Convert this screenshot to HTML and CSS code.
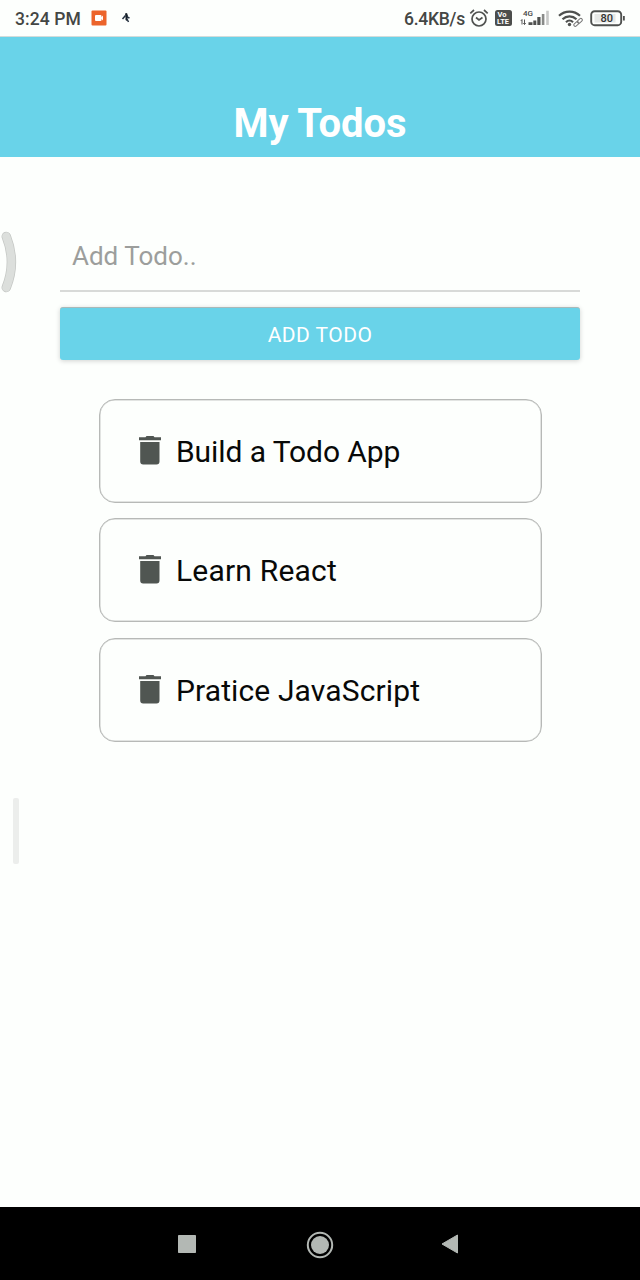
FILE: index.html
```
<!DOCTYPE html>
<html lang="en">
<head>
<meta charset="utf-8">
<title>My Todos</title>
<link rel="stylesheet" href="styles.css">
</head>
<body>
<div class="screen">
  <div class="status">
    <span class="clock">3:24 PM</span>
    <svg class="rec" width="16" height="16" viewBox="0 0 16 16"><rect x=".5" y=".5" width="15" height="15" rx="1" fill="#ec642b"/><rect x="4" y="5" width="6.500" height="6" rx="1" fill="#fff"/><path d="M9.500 8l2.500-2.500v5z" fill="#fff"/></svg>
    <svg class="bug" width="10" height="12" viewBox="0 0 10 12"><path d="M4 1.5L6 1l1 3-1 5-1.500-1 0-3z" fill="#172029"/><path d="M4.500 3.500L1.500 7M6 5l2.500 1M6 7l1.500 3" stroke="#253141" stroke-width="1.500" fill="none"/></svg>
    <span class="speed">6.4KB/s</span>
    <svg class="alarm" width="20" height="20" viewBox="0 0 20 20" fill="none" stroke="#505250" stroke-width="1.700"><circle cx="10" cy="11" r="7"/><path d="M1.300 5.300L5 2M18.700 5.300L15 2M7 9.500l3 2.500 3.500-2.500"/></svg>
    <svg class="volte" width="17" height="16" viewBox="0 0 17 16"><rect width="17" height="16" rx="2.500" fill="#4c4e4c"/><text x="2.500" y="7.200" class="vo">Vo</text><text x="2" y="14.200" class="lte">LTE</text></svg>
    <svg class="signal" width="30" height="18" viewBox="0 0 30 18"><text x="3" y="6.800" class="g4">4G</text><path d="M2 10.500v5M4.500 10.500v5M.8 12L2 10.500M3.300 14l1.200 1.500 1.200-1.500" stroke="#555" fill="none"/><path d="M8.500 13.300h4V16h-4zM13.300 11.500h3V16h-3zM17.300 8H20.500V16h-3.200z" fill="#4f514f"/><path d="M21.800 5h2.600V16h-2.600z" fill="#898b89"/><path d="M26.200 1.700H28.800V16h-2.600z" fill="#c8cac8"/></svg>
    <svg class="wifi" width="25" height="17" viewBox="0 0 25 17" fill="none" stroke="#4f514f" stroke-width="2.200"><path d="M1 5.800C7 .2 16 .2 22 5.800M4.500 9.200c4-3.800 10-3.800 14 0M8 12.200c2-2 5-2 7 0"/><circle cx="11.500" cy="14.500" r="1.700" fill="#4f514f" stroke="none"/><g stroke="#fdfffd" stroke-width="3.500"><path d="M16.500 15.500l7-7"/></g><g stroke="#777" stroke-width="1"><rect x="-2.800" y="-1.500" width="5.600" height="3" rx="1.500" transform="translate(18.300 14) rotate(-42)"/><rect x="-2.800" y="-1.500" width="5.600" height="3" rx="1.500" transform="translate(21.800 10.800) rotate(-42)"/></g></svg>
    <svg class="battery" width="36" height="17" viewBox="0 0 36 17"><rect x="1.200" y="1.200" width="30" height="14" rx="3.500" fill="none" stroke="#4f514f" stroke-width="1.900"/><rect x="4.500" y="4" width="21" height="8.500" fill="#e6e8e6"/><path d="M33 6h1.800v4.500H33z" fill="#4f514f"/><text x="16.800" y="12.200" text-anchor="middle" class="pct">80</text></svg>
  </div>
  <header class="header"><h1 class="title">My Todos</h1></header>
  <main class="content">
    <div class="field"><span class="hint">Add Todo..</span></div>
    <div class="button"><span class="label">ADD TODO</span></div>
    <div class="list">
      <div class="item"><svg class="trash" width="24" height="30" viewBox="0 0 24 30"><path d="M1 2.300h6.500L8.500 1h7l1 1.300H23v3H1zM2.200 7h19.300v19.500a3 3 0 0 1-3 3H5.200a3 3 0 0 1-3-3z"/></svg><span class="text build">Build a Todo App</span></div>
      <div class="item"><svg class="trash" width="24" height="30" viewBox="0 0 24 30"><path d="M1 2.300h6.500L8.500 1h7l1 1.300H23v3H1zM2.200 7h19.300v19.500a3 3 0 0 1-3 3H5.200a3 3 0 0 1-3-3z"/></svg><span class="text learn">Learn React</span></div>
      <div class="item"><svg class="trash" width="24" height="30" viewBox="0 0 24 30"><path d="M1 2.300h6.500L8.500 1h7l1 1.300H23v3H1zM2.200 7h19.300v19.500a3 3 0 0 1-3 3H5.200a3 3 0 0 1-3-3z"/></svg><span class="text practice">Pratice JavaScript</span></div>
    </div>
  </main>
  <nav class="nav">
    <svg width="18" height="18" viewBox="0 0 18 18"><rect width="18" height="18" rx=".7" fill="#b3b8b4"/></svg>
    <svg class="home" width="28" height="28" viewBox="0 0 28 28"><circle cx="14" cy="14" r="12.200" fill="none" stroke="#b3b8b4" stroke-width="2"/><circle cx="14" cy="14" r="9" fill="#b3b8b4"/></svg>
    <svg class="back" width="18" height="20" viewBox="0 0 18 20"><path d="M16.500 1v18L1 10z" fill="#b3b8b4" stroke="#b3b8b4" stroke-linejoin="round"/></svg>
  </nav>
  <svg class="edge-arc" width="18" height="64" viewBox="0 0 18 64" fill="none" stroke-linecap="round"><path d="M6.300 6.500Q16.500 32 6.300 57.500" stroke="#c4c7c4" stroke-width="9.500"/><path d="M6.300 6.500Q16.500 32 6.300 57.500" stroke="#dcdfdc" stroke-width="8"/></svg>
  <div class="edge-bar"></div>
</div>
</body>
</html>
```
FILE: styles.css
```
* { box-sizing: border-box; }
body { margin: 0; font-family: Roboto, "Liberation Sans", sans-serif; background: #fdfffd; }
.screen { position: relative; width: 640px; height: 1280px; display: flex; flex-direction: column; background: #fdfffd; overflow: hidden; }
.status { height: 37px; flex: none; display: flex; align-items: center; padding: 0 14px 0 15px; color: #444644; border-bottom: 1px solid #d3dcda; }
.status svg { flex: none; }
.clock, .speed { font-size: 17.500px; font-weight: 500; white-space: nowrap; line-height: 20px; padding-top: 1px; }
.clock { width: 76px; letter-spacing: .1px; }
.bug { margin-left: 14px; }
.speed { margin-left: auto; width: 65px; letter-spacing: -.25px; }
.alarm { margin-right: 6px; }
.volte { margin-right: 8px; }
.signal { margin-right: 8px; }
.wifi { margin-right: 7px; }
.vo, .lte { font-size: 7.500px; font-weight: 700; fill: #fff; }
.g4 { font-size: 8px; font-weight: 500; fill: #444; }
.pct { font-size: 11px; font-weight: 500; fill: #333; }
.header { height: 120px; flex: none; display: flex; justify-content: center; padding-top: 63px; background: #69d3e9; }
.title { margin: 0; font-size: 40px; line-height: 48px; font-weight: 700; color: #fff; white-space: nowrap; letter-spacing: -.1px; }
.content { flex: 1; padding: 65px 60px 0; }
.field { height: 70px; padding: 18px 12px 0; border-bottom: 2px solid #d8dad8; }
.hint { display: block; font-size: 26px; line-height: 32px; color: #9c9e9c; }
.button { height: 53px; margin-top: 15px; display: flex; align-items: center; justify-content: center; background: #69d3e9; border-radius: 3px; box-shadow: 0 1px 5px rgba(0,0,0,.18); border-top: 1px solid #a9b9b9; }
.label { font-size: 21px; line-height: 24px; color: #fff; padding-top: 1px; letter-spacing: .45px; }
.list { display: flex; flex-direction: column; gap: 15.500px; margin: 38.500px 38px 0 38.500px; }
.item { height: 104px; display: flex; align-items: center; padding-left: 37px; border: 1px solid #b7b9b7; border-radius: 16px; box-shadow: inset 0 0 0 .5px #c7c9c7; }
.trash { margin: 0 15px 2px 1px; fill: #505652; }
.text { font-size: 30px; line-height: 36px; color: #080908; white-space: nowrap; padding-top: 2px; margin-left: -.5px; }
.build { letter-spacing: -.08px; }
.learn { letter-spacing: .2px; }
.practice { letter-spacing: .12px; }
.nav { height: 73px; flex: none; display: flex; align-items: center; padding: 0 181px 0 177.500px; justify-content: space-between; background: #000; }
.home { margin: 2px 0 0 3px; }
.edge-arc { position: absolute; left: 0; top: 230px; }
.edge-bar { position: absolute; left: 13px; top: 798px; width: 6px; height: 66px; border-radius: 2px; background: #eceeec; }
```
